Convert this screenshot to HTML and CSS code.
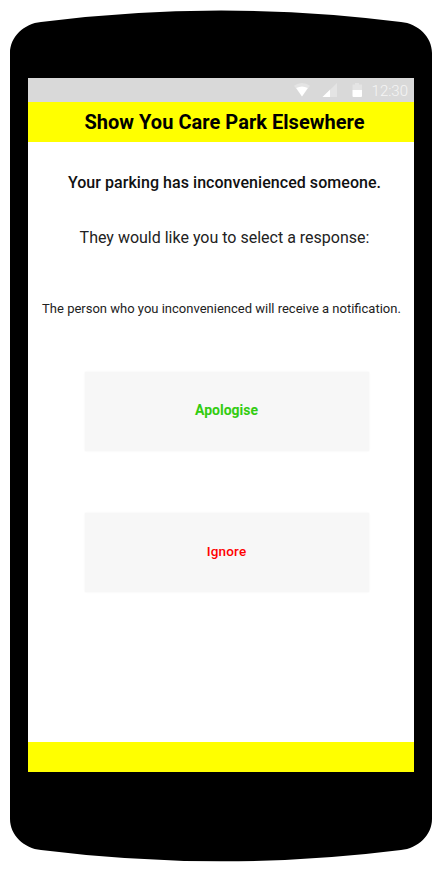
FILE: index.html
```html
<!DOCTYPE html>
<html lang="en">
<head>
<meta charset="utf-8">
<title>Show You Care Park Elsewhere</title>
<link rel="stylesheet" href="styles.css">
</head>
<body>
<div class="phone">
  <svg class="phone-shell" viewBox="0 0 442 872" aria-hidden="true">
    <path d="M10 53C10 37 24 23.500 41 22Q130 10.500 221 10.500T401 22C418 23.500 432 37 432 53V819C432 835 418 848.500 401 850Q312 861.300 221 861.300T41 850C24 848.500 10 835 10 819Z"/>
  </svg>
  <main class="screen">
    <div class="status">
      <svg class="status-icons" viewBox="0 0 72 24" aria-hidden="true">
        <path class="dim" d="M0 7.700Q8 2.300 16 7.700L8 18.500Z"/>
        <path class="lit" d="M2.200 10Q8 7 13.800 10L8 18.500Z"/>
        <path class="dim" d="M28.500 19L43 5V19Z"/>
        <path class="lit" d="M28.500 19L36 11.800V19Z"/>
        <path class="dim" d="M58.500 6.500H61V5H65V6.500H68V12H58.500Z"/>
        <path class="lit" d="M58.500 12H68V18Q68 19 67 19H59.500Q58.500 19 58.500 18Z"/>
      </svg>
      <span class="time">12:30</span>
    </div>
    <header class="title">Show You Care Park Elsewhere</header>
    <section class="content">
      <p class="lead">Your parking has inconvenienced someone.</p>
      <p class="prompt">They would like you to select a response:</p>
      <p class="note">The person who you inconvenienced will receive a notification.</p>
      <button class="choice apologise">Apologise</button>
      <button class="choice ignore">Ignore</button>
    </section>
    <footer class="bottom"></footer>
  </main>
</div>
</body>
</html>
```
FILE: styles.css
```css
body {
  margin: 0;
  background: #fff;
  font-family: Roboto, "Liberation Sans", sans-serif;
}
.phone {
  position: relative;
  box-sizing: border-box;
  width: 442px;
  height: 872px;
  padding: 78px 28px 100px;
}
.phone-shell {
  position: absolute;
  inset: 0;
  width: 442px;
  height: 872px;
}
.screen {
  position: relative;
  display: flex;
  flex-direction: column;
  height: 694px;
  background: #fff;
}
.status {
  display: flex;
  justify-content: flex-end;
  align-items: center;
  height: 24px;
  padding-right: 6px;
  background: #d9d9d9;
}
.status-icons {
  width: 72px;
  height: 24px;
  margin-right: 6px;
}
.dim { fill: #e4e4e4; }
.lit { fill: #fff; }
.time {
  font-size: 15px;
  font-weight: 300;
  line-height: 24px;
  padding-top: 2px;
  color: #f5f5f5;
}
.title {
  height: 40px;
  line-height: 40px;
  padding-left: 7px;
  background: #ff0;
  color: #000;
  font-size: 20px;
  font-weight: 700;
  letter-spacing: 0.04px;
  text-align: center;
  white-space: nowrap;
}
.content {
  flex: 1;
  display: flex;
  flex-direction: column;
  align-items: center;
  padding-left: 7px;
}
.content p {
  margin: 0;
  line-height: 20px;
  white-space: nowrap;
  color: #111;
}
.content .lead {
  margin-top: 31px;
  font-size: 16px;
  font-weight: 500;
  letter-spacing: 0.05px;
}
.content .prompt {
  margin-top: 35px;
  font-size: 16px;
  color: #222;
}
.content .note {
  margin: 51px 6px 0 0;
  font-size: 13px;
  color: #222;
}
.choice {
  width: 284px;
  height: 79px;
  padding: 0 0 3px;
  border: 0;
  background: #f7f7f7;
  box-shadow: 0 0 2px #f2f2f2;
  font-family: inherit;
  font-size: 14px;
  font-weight: 500;
  line-height: 20px;
}
.apologise {
  margin: 53px 0 62px 4px;
  color: #3c1;
  font-weight: 700;
}
.ignore {
  margin-left: 4px;
  color: #f00;
  font-size: 13.5px;
  letter-spacing: 0.2px;
}
.bottom {
  height: 30px;
  background: #ff0;
}
```
